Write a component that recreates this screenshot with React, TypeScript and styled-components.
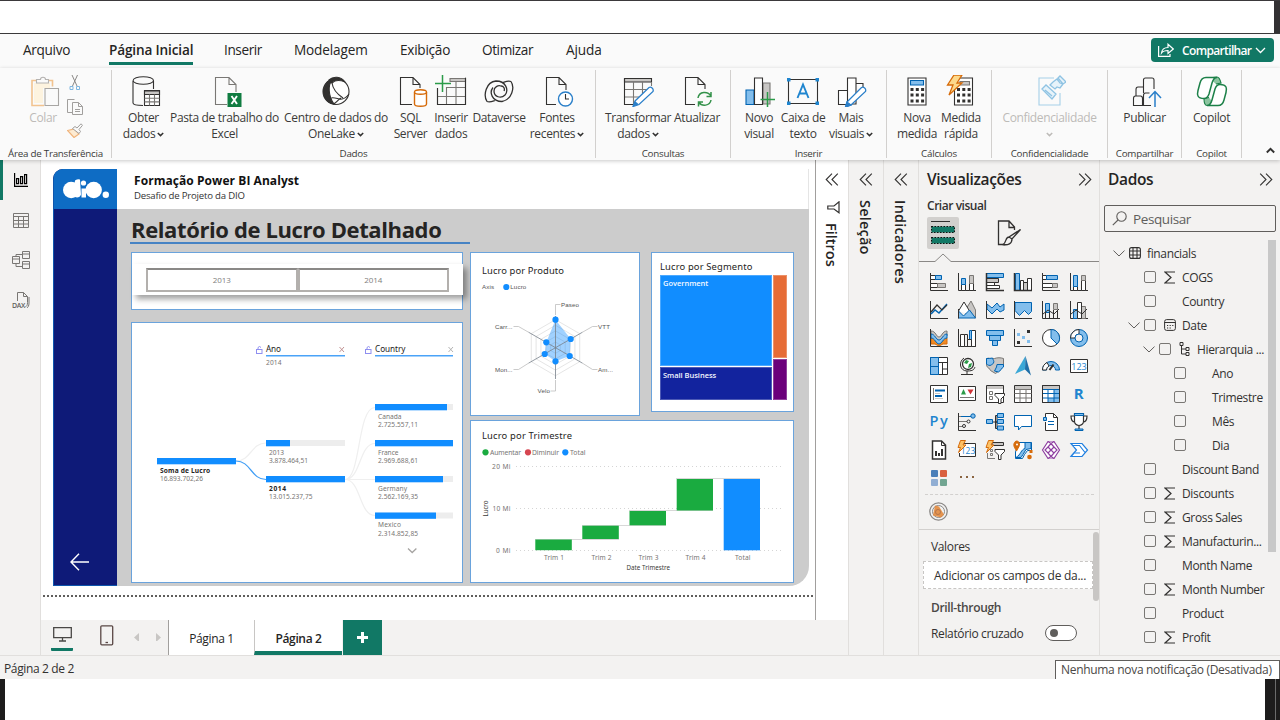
import React from "react";
import styled, { createGlobalStyle } from "styled-components";

const INK = "#323130";
const GREEN = "#117865";
const BLUE = "#0063b1";
const SKY = "#83beec";
const GREY = "#797774";
const SILVER = "#c8c6c4";
const ORANGE = "#d66b0a";
const UI = `"Open Sans", "Noto Sans", sans-serif`;

const Global = createGlobalStyle`
  * { box-sizing: border-box; }
  body { margin: 0; background: #fff; font-family: ${UI}; font-size: 12px; letter-spacing: -0.03em; color: ${INK}; overflow: hidden; }
  svg { display: block; flex: none; }
`;

/* ---------- frame ---------- */
const Screen = styled.div`
  width: 1280px; height: 720px; display: flex; flex-direction: column; background: #fff; overflow: hidden;
`;
const TopStrip = styled.div`
  height: 34px; display: flex; justify-content: flex-end; border-top: 1px solid #3b393b; border-bottom: 1px solid #3b393b; flex: none;
`;
const TopEdge = styled.div`width: 6px; background: #333133;`;
const BottomStrip = styled.div`flex: 1; display: flex; justify-content: space-between;`;
const BottomEdge = styled.div<{ $w: number }>`
  width: ${(p) => p.$w}px; background: #1d1c1c; display: flex; justify-content: flex-end; padding-right: ${(p) => (p.$w > 6 ? 4 : 0)}px;
`;
const EdgeLine = styled.div`width: 1px; background: #6b6b6b;`;

/* ---------- menu ---------- */
const MenuBar = styled.div`
  height: 34px; flex: none; background: #fafafa; display: flex; align-items: center; padding: 0 6px 0 23px;
`;
const MenuItem = styled.div<{ $w: number; $on?: boolean; $ls?: number }>`
  width: ${(p) => p.$w}px; font-size: 13.6px; letter-spacing: ${(p) => p.$ls ?? -0.4}px; font-weight: ${(p) => (p.$on ? 600 : 400)}; color: #252423; white-space: nowrap;
  & > span { display: inline-block; height: 28px; line-height: 26px; margin-top: -1px; border-bottom: 3px solid ${(p) => (p.$on ? GREEN : "transparent")}; }
`;
const ShareButton = styled.button`
  margin-left: auto; width: 123px; height: 24px; border: 0; border-radius: 4px; background: ${GREEN}; color: #fff; font: 600 12px ${UI};
  letter-spacing: -0.65px; display: flex; align-items: center; padding: 0 7px; gap: 8px; margin-top: -2px;
  & > svg:last-child { margin-left: -4px; }
`;

/* ---------- ribbon ---------- */
const Ribbon = styled.div`
  height: 92px; flex: none; background: #fafafa; display: flex; position: relative; z-index: 2; box-shadow: 0 1px 4px rgba(0,0,0,.22);
`;
const Group = styled.div<{ $w: number }>`
  width: ${(p) => p.$w}px; margin: 2px 0 2px; border-right: 1px solid #d2d0ce; display: flex; flex-direction: column; flex: none;
`;
const GroupBody = styled.div<{ $pad?: number }>`
  flex: 1; display: flex; padding-left: ${(p) => p.$pad ?? 0}px; justify-content: ${(p) => (p.$pad ? "flex-start" : "center")};
`;
const GroupName = styled.div`
  height: 12px; line-height: 12px; margin-bottom: -2px; font-size: 9.8px; letter-spacing: -0.25px; text-align: center; white-space: nowrap; color: #3b3a39;
`;
const RibbonBtn = styled.div<{ $w: number; $dim?: boolean }>`
  width: ${(p) => p.$w}px; display: flex; flex-direction: column; align-items: center; color: ${(p) => (p.$dim ? "#bdbbb8" : "#3b3a39")};
`;
const IconBox = styled.div<{ $shift: number }>`height: 40px; display: flex; align-items: center; justify-content: center; padding: 2px 0 0 ${(p) => p.$shift * 2}px;`;
const Line = styled.div`height: 16px; line-height: 16px; white-space: nowrap; display: flex; align-items: center; gap: 2px;`;
const ClipTools = styled.div`display: flex; flex-direction: column; align-items: center; gap: 8px; padding: 5px 0 0 3px;`;
const RibbonEnd = styled.div`flex: 1; display: flex; align-items: flex-end; justify-content: flex-end; padding: 0 5px 6px 0;`;

const Caret = ({ c = INK }: { c?: string }) => (
  <svg width="7" height="5" viewBox="0 0 7 5" fill="none" stroke={c} strokeWidth="1.5"><path d="M.8 1l2.7 2.6L6.2 1" /></svg>
);

const Pic = ({ w = 32, h = 32, children }: { w?: number; h?: number; children: React.ReactNode }) => (
  <svg width={w} height={h} viewBox={`0 0 ${w} ${h}`} fill="none" stroke={INK} strokeWidth="1.1">{children}</svg>
);

const icons = {
  paste: <Pic><path d="M8 5.500H3v25h12M18 5.500h5.500v6" stroke="#f2c38f" strokeWidth="1.6" /><path d="M5 8v20h9V13h7V8z" fill="#fdf3df" stroke="none" /><path d="M7.500 8V4.500h4c0-3 5-3 5 0h3V8z" stroke="#b5b3b1" fill="#fafafa" /><path d="M16 13.500h13.500v17H16z" fill="#fafafa" stroke="#a8a6a4" /></Pic>,
  database: <Pic><path d="M3 6v22c0 1.800 4 2.500 10 2.500M23.500 6v8" /><ellipse cx="13.300" cy="5.500" rx="10.200" ry="3.800" /><path d="M14.500 15.500h15v15h-15z" fill="#fff" /><path d="M14.500 16h15v3.500h-15z" fill={SILVER} /><path d="M14.500 23.200h15M14.500 26.900h15M19.500 19.500v11M24.500 19.500v11" stroke={GREY} /></Pic>,
  excel: <Pic><path d="M17 29.500H5.500v-27H19l7 7V17M19 2.500V9.500h7" stroke={GREY} /><path d="M17.500 18h14v14h-14z" fill="#107c41" stroke="none" /><path d="M21.500 21l5.500 8M27 21l-5.500 8" stroke="#fff" strokeWidth="1.900" /></Pic>,
  onelake: <Pic><circle cx="16" cy="16.500" r="13" fill="#fff" /><path d="M6.500 8C8 5 10 6 12 5c-4 5-4 16 2 24C5 28 0 17 6.500 8z" fill={INK} /><path d="M9 5C13 1 21 1 25 7c-5-2-10-2-13 1z" fill={INK} /><path d="M12 8c1 7 5 11 11 15M8 26c3-5 7-3 11-2 4 1 7-1 10-5M13 29c4-1 4-4 8-6" /></Pic>,
  sql: <Pic><path d="M16 29.500H4.500v-27H17l7 7V13M17 2.500V9.500h7" /><path d="M18.500 17v12c0 3 12 3 12 0V17" stroke={ORANGE} fill="#fff" strokeWidth="1.400" /><ellipse cx="24.500" cy="17" rx="6" ry="2.200" stroke={ORANGE} fill="#fff" strokeWidth="1.400" /></Pic>,
  insert: <Pic><path d="M15 3.500h15.500v3H15z" fill={SILVER} stroke={GREY} /><path d="M2.500 13v16.500h28V2.500M2.500 21.500h28M12 12.500h18.500M11.500 12v17.500M21 7v22.500" stroke={GREY} /><path d="M2.500 13v16.500h28V3" /><path d="M7.500 0v17M0 8.500h16" stroke="#2b9b48" strokeWidth="1.500" /></Pic>,
  dataverse: <Pic><path d="M4 26.500C0 20 3 7 13 6c10 0 13 9 9 14-4 4-11 2-11-4 0-4 4-6 7-5 3 0 4 3 3 5M28 6.500c4 6 1 18-9 20-10 0-13-9-9-14M4 26.500c3 1 5 0 8-1M28 6.500c-3-1-5 0-8 1" strokeWidth="1.300" /></Pic>,
  recent: <Pic><path d="M14 29.500H4.500v-27H17l7 7V15M17 2.500V9.500h7" /><circle cx="23.500" cy="24" r="7" stroke="#2a7fc9" fill="#fff" strokeWidth="1.400" /><path d="M23.500 19v5h3.500" /></Pic>,
  transform: <Pic><path d="M2.500 3.500h27v3.500h-27z" fill={SILVER} /><path d="M2.500 14.500h27M2.500 22h20M11.500 7v22.500M20.500 7v18M29.500 7v4" stroke={GREY} /><path d="M2.500 3.500v26h11" /><path d="M13 26L27 12.500c2-1 5 1 4 4L17 29.500l-6 2z" fill="#fff" stroke="#2a7fc9" strokeWidth="1.300" /><path d="M13 26l4 3.500-6 2z" fill="#2a7fc9" stroke="none" /></Pic>,
  refresh: <Pic><path d="M14 29.500H4.500v-27H17l7 7V14M17 2.500V9.500h7" /><path d="M17 23c1-7 10-7 13-2m0-4v4.500h-4.500M30 25c-1 6-9 7-12.500 2m0 4.500v-4.500H22" stroke="#33914a" strokeWidth="1.500" /></Pic>,
  newVisual: <Pic><path d="M3 15h8v14.500H3z" fill={SKY} stroke={BLUE} /><path d="M20 8h7v21h-7z" fill={SILVER} stroke={GREY} /><path d="M11.500 3h8v26.500h-8z" fill="#fff" /><path d="M24.500 17v15M17.500 24.500H32" stroke="#2b9b48" strokeWidth="1.500" /></Pic>,
  textBox: <Pic><path d="M1.500 4.500h29v24h-29z" /><path d="M0 3h3.500v3.500H0zM28.500 3H32v3.500h-3.500zM0 26.500h3.500V30H0zM28.500 26.500H32V30h-3.500z" fill="#1f85cf" stroke="none" /><path d="M10.500 23L16 9.500 21.500 23M12.500 18.500h7" stroke="#1f85cf" strokeWidth="1.900" /></Pic>,
  moreVisuals: <Pic><path d="M3.500 15.500h9v14h-9zM12.500 3h8.500v26h-8.500zM21 8.500h7v8" fill="#fff" /><path d="M12 27L26.500 12.500c2-1 5 1 4 4L16 30l-5.500 2z" fill="#fff" stroke="#2a7fc9" strokeWidth="1.300" /><path d="M12 27l4 3-5.500 2z" fill="#2a7fc9" stroke="#2a7fc9" /></Pic>,
  calc: <Pic><path d="M7 3h18v27H7z" fill="#fff" /><path d="M9.500 5.500h13V10h-13z" fill={SKY} stroke={BLUE} /><path d="M9.500 14.500h14M9.500 20h14M9.500 26h14" strokeWidth="3" strokeDasharray="3 2.300" /></Pic>,
  quick: <Pic><path d="M9.500 3h18v27h-18z" fill="#fff" /><path d="M15 6.500h9.500V10H15z" fill={SILVER} stroke={GREY} /><path d="M12 14.500h14M12 20h14M12 26h14" strokeWidth="3" strokeDasharray="3 2.300" /><path d="M9 0h8l-5 8h5L4 20l4-10H2.500z" fill="#fdd98b" stroke={ORANGE} strokeWidth="1.300" /></Pic>,
  sensitivity: <Pic><path d="M20 3H5v27h21V18" stroke="#a5cfe8" /><path d="M8 14l4-4 10 9-4 5zM11 15l7 6M19 7l4-3 3 4 3 1-3 4-3-1-2 2-5-4zM24 3l2-2 6 6-3 2z" stroke="#8fc3e3" fill="#e7f3fa" strokeWidth="1.300" /></Pic>,
  publish: <Pic><path d="M2.500 30.500v-7c0-2 1-2.500 2-2.500h5c1.500 0 2 1 2 2.500v7zM12.500 30.500v-10c0-2 1-2.500 2-2.500h4M20 30.500h-8M5 20.500v-6c0-2 1-2.500 2-2.500h5.500v6M12.500 12V5c0-1.500 1-2 2-2h6.500c1 0 2 .5 2 2v9" /><path d="M24 32V17M18 23l6-6.500 6 6.500" stroke="#2a7fc9" strokeWidth="1.500" /></Pic>,
  copilot: <Pic><path d="M13 3l8-1c2 0 3 2 4 6l-5 1M19 30l-8 .5c-2 0-3-3-3-7l5-1" fill="#8cc4a0" stroke="#1c8048" /><path d="M4 8c1-4 3-5.500 6-5.500h11c-3 0-4 2-5 5.500l-3 11c-1 3-2 4.500-5 4.500-7 0-7-4-6-8zM28 25c-1 4-3 5.500-6 5.500H11c3 0 4-2 5-5.500l3-11c1-3 2-4.500 5-4.500 7 0 7 4 6 8z" stroke="#1c8048" strokeWidth="1.500" fill="#fff" /></Pic>,
};
const iconShift: Partial<Record<keyof typeof icons, number>> = { paste: 2, database: 2, sql: 1, excel: 1, publish: 2, recent: 1, transform: 0, calc: -0, newVisual: 0 };

const Lines = ({ rows, caret, dim }: { rows: string[]; caret?: boolean; dim?: boolean }) => (
  <>
    {rows.map((r, i) => (
      <Line key={i}>{r}{caret && i === rows.length - 1 ? <Caret c={dim ? "#bdbbb8" : INK} /> : null}</Line>
    ))}
  </>
);
const Btn = ({ icon, rows, w, caret, dim }: { icon: keyof typeof icons; rows: string[]; w: number; caret?: boolean; dim?: boolean }) => (
  <RibbonBtn $w={w} $dim={dim}>
    <IconBox $shift={iconShift[icon] ?? 0}>{icons[icon]}</IconBox>
    <Lines rows={rows} caret={caret} dim={dim} />
  </RibbonBtn>
);

/* ---------- body columns ---------- */
const Body = styled.div`height: 495px; flex: none; display: flex; background: #f3f2f1;`;
const Rail = styled.div`width: 41px; border-right: 1px solid #e1dfdd; display: flex; flex-direction: column; flex: none;`;
const RailItem = styled.div<{ $on?: boolean }>`
  height: 40px; display: flex; align-items: center; justify-content: center; border-left: 3px solid ${(p) => (p.$on ? GREEN : "transparent")};
  padding-right: 2px;
`;
const Center = styled.div`width: 808px; display: flex; flex-direction: column; border-right: 1px solid #e1dfdd; flex: none;`;
const CenterTop = styled.div`height: 460px; display: flex; background: #fff;`;
const Canvas = styled.div`width: 775px; border-right: 1px solid #a19f9d; padding: 9px 0 0 12px; overflow: hidden;`;
const Dotted = styled.div`
  margin: 9px 1px 0 -10px; height: 2px; background: repeating-linear-gradient(90deg, #605e5c 0 2px, #fff 2px 4px);
`;
const SidePane = styled.div<{ $w: number; $bg?: string; $last?: boolean }>`
  width: ${(p) => p.$w}px; background: ${(p) => p.$bg ?? "#f3f2f1"}; border-right: ${(p) => (p.$last ? 0 : 1)}px solid #e1dfdd; flex: none;
  display: flex; flex-direction: column; align-items: center; padding-top: 13px;
`;
const FunnelBox = styled.div`padding: 15px 0 0 3px;`;
const Vertical = styled.div<{ $mt: number; $ls?: number }>`
  writing-mode: vertical-rl; font-size: 14.5px; font-weight: 600; line-height: 18px; letter-spacing: ${(p) => p.$ls ?? 0.2}px; margin-top: ${(p) => p.$mt}px; margin-right: 3px; color: #252423; white-space: nowrap;
`;

/* ---------- report ---------- */
const Report = styled.div`width: 756px; height: 417px; display: flex; border-radius: 10px 0 20px 0; overflow: hidden; background: #ccc;`;
const Brand = styled.div`width: 64px; background: #0e1a78; display: flex; flex-direction: column; justify-content: space-between; flex: none; border-left: 1px solid #0e56ad; border-bottom: 1px solid #0e56ad;`;
const Logo = styled.div`height: 40px; background: #0e6cc4; display: flex; align-items: center; padding-left: 8px;`;
const Back = styled.div`height: 44px; padding: 12px 0 0 16px;`;
const Sheet = styled.div`flex: 1; display: flex; flex-direction: column;`;
const SheetHead = styled.div`height: 40px; background: #fff; padding: 4px 0 0 17px; border-right: 1px solid #e5e5e5;`;
const HeadTitle = styled.div`font-size: 12px; font-weight: 700; line-height: 16px; letter-spacing: 0.06px; color: #111;`;
const HeadSub = styled.div`font-size: 9.6px; line-height: 14px; letter-spacing: -0.2px; color: #333;`;
const BigTitle = styled.div`
  width: 340px; height: 35px; margin-left: 13px; border-bottom: 2px solid #4683c4; font-size: 22px; font-weight: 700; letter-spacing: -0.38px; line-height: 40px; color: #252423;
  padding-left: 1px; white-space: nowrap;
`;
const Board = styled.div`display: flex; gap: 7px; padding: 8px 0 0 14px;`;
const Column = styled.div<{ $w: number }>`width: ${(p) => p.$w}px; display: flex; flex-direction: column;`;
const Pair = styled.div`display: flex; justify-content: space-between; align-items: flex-start; height: 168px;`;
const Card = styled.div<{ $w: number; $h: number; $mt?: number }>`
  width: ${(p) => p.$w}px; height: ${(p) => p.$h}px; margin-top: ${(p) => p.$mt ?? 0}px; background: #fff; border: 1px solid #6aa3dc; flex: none;
`;
const Slicer = styled.div`
  margin: 11px -1px 0 0; height: 31px; background: #fff; display: flex; padding: 4px 14px 4px 14px; box-shadow: 4px 4px 6px rgba(0,0,0,.38);
`;
const SlicerTile = styled.div`
  flex: 1; height: 24px; border: 2px solid #b3b0ad; border-top-color: #8a8886; line-height: 20px; text-align: center; font-size: 8px; letter-spacing: -0.1px; color: #807e7c;
`;
const ChartTitle = styled.div`font-size: 9.4px; line-height: 12px; letter-spacing: 0.15px; font-family: "Noto Sans", sans-serif; color: #252423; white-space: nowrap;`;
const MapBox = styled.div`padding: 8px 6px 0 8px;`;
const MapRow = styled.div`display: flex; gap: 1px; height: 125px; margin-top: 2px;`;
const MapCol = styled.div<{ $w: number }>`width: ${(p) => p.$w}px; display: flex; flex-direction: column; gap: 1px;`;
const MapTile = styled.div<{ $c: string; $h: number }>`
  background: ${(p) => p.$c}; height: ${(p) => p.$h}px; color: #f4f8ff; font-size: 7.500px; font-weight: 600; letter-spacing: -0.03px; line-height: 10px; padding: 2px 0 0 2px; border: 1px solid rgba(255,255,255,.25);
  white-space: nowrap;
`;

/* ---------- page tabs and status ---------- */
const TabBar = styled.div`height: 35px; display: flex; background: #f3f2f1;`;
const Views = styled.div`width: 127px; display: flex; padding: 4px 6px 0 10px;`;
const View = styled.div<{ $w: number; $on?: boolean; $ml?: number; $pb?: number }>`
  width: ${(p) => p.$w}px; height: 27px; margin-left: ${(p) => p.$ml ?? 0}px; border-bottom: 3px solid ${(p) => (p.$on ? GREEN : "transparent")}; border-radius: 1px;
  display: flex; justify-content: center; align-items: center; padding-bottom: ${(p) => p.$pb ?? 3}px;
`;
const PageTab = styled.div<{ $w: number; $on?: boolean }>`
  width: ${(p) => p.$w}px; background: #fff; border-left: 1px solid ${(p) => (p.$on ? "#c8c6c4" : "#a19f9d")}; text-align: center; line-height: 37px; font-size: 12px;
  font-weight: ${(p) => (p.$on ? 600 : 400)}; letter-spacing: ${(p) => (p.$on ? -0.35 : -0.35)}px; color: #252423; border-bottom: ${(p) => (p.$on ? 4 : 0)}px solid ${GREEN};
`;
const AddTab = styled.div`width: 39px; margin-left: 1px; background: ${GREEN}; display: flex; align-items: center; justify-content: center;`;
const Status = styled.div`
  height: 24px; flex: none; background: #f3f2f1; border-top: 1px solid #e1dfdd; padding-left: 4px; line-height: 26px; position: relative; font-size: 12px;
`;
const Notice = styled.div`
  position: absolute; right: 0; top: 4px; width: 225px; height: 19px; background: #fff; border: 1px solid #605e5c; border-bottom: 0; line-height: 18px; padding-left: 5px; color: #4a4846;
  letter-spacing: -0.31px; white-space: nowrap;
`;

/* ---------- visualizations ---------- */
const VisPane = styled.div`width: 181px; border-right: 1px solid #e1dfdd; display: flex; flex-direction: column; flex: none;`;
const PaneHead = styled.div`
  height: 38px; display: flex; align-items: center; justify-content: space-between; padding: 0 7px 0 8px; font-size: 15.5px; font-weight: 600; letter-spacing: -0.35px; color: #252423;
`;
const SubHead = styled.div`padding-left: 8px; height: 16px; line-height: 16px; font-weight: 600; letter-spacing: -0.46px;`;
const Modes = styled.div`height: 47px; display: flex; padding: 3px 0 0 8px; gap: 34px;`;
const Mode = styled.div<{ $on?: boolean }>`
  width: 32px; height: 32px; border-radius: 2px; background: ${(p) => (p.$on ? "#d2d0ce" : "transparent")}; display: flex; align-items: center; justify-content: center;
`;
const TabLine = styled.svg`margin-top: -8px;`;
const VisGrid = styled.div`
  display: grid; grid-template-columns: repeat(6, 28px); grid-auto-rows: 28px; padding-left: 6px; margin-top: 6px; justify-items: center; align-items: center; height: 224px;
`;
const Dashes = styled.div`margin: 2px 5px 0 6px; border-top: 1px dashed #d2d0ce;`;
const Custom = styled.div`height: 35px; padding: 7px 0 0 10px; border-bottom: 1px solid #d2d0ce;`;
const Fields = styled.div`flex: 1; display: flex; justify-content: space-between; padding-top: 2px;`;
const FieldCol = styled.div`width: 174px;`;
const FieldName = styled.div<{ $b?: boolean }>`
  padding-left: 12px; height: 30px; line-height: 30px; font-weight: ${(p) => (p.$b ? 600 : 400)}; color: ${(p) => (p.$b ? "#4a4846" : INK)};
`;
const Well = styled.div`
  margin: -1px 0 4px 4px; height: 28px; background: #fff; border: 1px dashed #c8c6c4; line-height: 27px; padding-left: 10px; white-space: nowrap; letter-spacing: -0.27px;
`;
const CrossRow = styled.div`padding: 0 16px 0 12px; height: 20px; display: flex; align-items: center; justify-content: space-between;`;
const Toggle = styled.div`width: 32px; height: 16px; border-radius: 8px; border: 1px solid #605e5c; background: #fff; padding: 3px 4px;`;
const Knob = styled.div`width: 8px; height: 8px; border-radius: 50%; background: #605e5c;`;
const ThumbA = styled.div`width: 6px; height: 69px; border-radius: 3px; background: #c8c6c4;`;

/* ---------- data ---------- */
const DataPane = styled.div`width: 180px; display: flex; flex-direction: column; flex: none;`;
const Search = styled.div`
  margin: 7px 4px 9px; height: 27px; border: 1px solid #605e5c; border-radius: 2px; display: flex; align-items: center; gap: 6px; padding-left: 7px; font-size: 13.500px; letter-spacing: -0.4px; color: #605e5c;
`;
const Tree = styled.div`display: flex; justify-content: space-between; flex: 1; padding-right: 4px;`;
const TreeRows = styled.div`width: 168px; overflow: visible;`;
const TreeRow = styled.div<{ $in: number }>`height: 24px; display: flex; align-items: center; padding-left: ${(p) => p.$in}px; white-space: nowrap;`;
const Slot = styled.div<{ $w: number }>`width: ${(p) => p.$w}px; flex: none; display: flex; align-items: center;`;
const Check = styled.div`width: 12px; height: 12px; border: 1px solid #797774; border-radius: 2px; margin-top: -1px;`;
const ThumbB = styled.div`width: 8px; height: 312px; margin-top: -1px; background: #c8c8c8;`;

const DoubleChevron = ({ left }: { left?: boolean }) => (
  <svg width="14" height="13" viewBox="0 0 14 13" fill="none" stroke={INK} strokeWidth="1.1">
    <path d={left ? "M7 .7L1.200 6.500 7 12.300M12.800 .7L7 6.500l5.800 5.800" : "M1.200 .7L7 6.500 1.200 12.300M7 .7l5.800 5.800L7 12.300"} />
  </svg>
);
const Chevron = () => <svg width="12" height="7" viewBox="0 0 12 7" fill="none" stroke="#605e5c"><path d="M.5 .6L6 6 11.500 .6" /></svg>;
const Sigma = () => <svg width="12" height="13" viewBox="0 0 12 13" fill="none" stroke={INK} strokeWidth="1.2"><path d="M11 1H1l6 5.500L1 12h10" /></svg>;
const Cal = () => (
  <svg width="12" height="12" viewBox="0 0 12 12" fill="none" stroke={INK}><rect x=".6" y=".6" width="10.800" height="10.800" rx="2" /><path d="M.6 3.500h10.800" /><path d="M3 6.500h7M3 9h5" strokeDasharray="1.200 1.400" /></svg>
);
const Hier = () => (
  <svg width="12" height="14" viewBox="0 0 12 14" fill="none" stroke={INK}><path d="M1 .5h3v3H1zM7 5.500h3v3H7zM7 10.500h3v3H7zM2.500 3.500V12H7M2.500 7H7" /></svg>
);
const TableIcon = () => (
  <svg width="12" height="12" viewBox="0 0 12 12" fill="none" stroke={INK} strokeWidth="1.100"><rect x=".6" y=".6" width="10.800" height="10.800" rx="2" /><path d="M.6 4h10.800M.6 8h10.800M4 .6v10.800M8 .6v10.800" /></svg>
);

const V = ({ children }: { children: React.ReactNode }) => (
  <svg width="18" height="18" viewBox="0 0 18 18" fill="none" stroke={INK} overflow="visible">{children}</svg>
);
const axis = <path d="M.5 0v17.500H18" />;
const table = <><path d="M.5.500h17v17H.500z" fill="#fff" /><path d="M1 1h16v3H1z" fill={SILVER} stroke="none" /></>;
const bolt = <path d="M2.500-.500h5L5 4h3L.500 11.500 2.500 6.500H0z" fill="#fdc266" stroke={ORANGE} />;

const visuals: React.ReactNode[] = [
  <V>{axis}<path d="M.5 2.500h5v4h-5zM.5 10.500h7v4h-7z" fill="#fff" /><path d="M5.500 2.500h6v4h-6z" fill={SKY} stroke={BLUE} /><path d="M7.500 10.500h8v4h-8z" fill={SILVER} stroke={GREY} /></V>,
  <V>{axis}<path d="M3.500 11.500h4v6h-4zM11.500 10.500h4v7h-4z" fill="#fff" /><path d="M3.500 5.500h4v6h-4z" fill={SKY} stroke={BLUE} /><path d="M11.500 2.500h4v8h-4z" fill={SILVER} stroke={GREY} /></V>,
  <V><path d="M.5 5.500h12v4H.500z" fill={SILVER} /><path d="M.5 9.500h8v3h-8zM.5 12.500h13v3H.500z" fill="#fff" /><path d="M.5.500h17v4H.500z" fill={SKY} stroke={BLUE} /><path d="M.5 0v17.500H18" strokeWidth="1.500" /></V>,
  <V><path d="M6.500 7.500h3v10h-3zM13.500 5.500h4v12h-4z" fill="#fff" /><path d="M9.500 9.500h4v8h-4z" fill={SILVER} /><path d="M1.500.500h4v17h-4z" fill={SKY} stroke={BLUE} /><path d="M.5 0v17.500H18" strokeWidth="1.500" /></V>,
  <V>{axis}<path d="M.5 2.500h4v4h-4zM.5 10.500h10v4H.500z" fill="#fff" /><path d="M4.500 2.500h11v4h-11z" fill={SKY} stroke={BLUE} /><path d="M10.500 10.500h5v4h-5z" fill={SILVER} stroke={GREY} /></V>,
  <V>{axis}<path d="M3.500 13.500h4v4h-4zM11.500 7.500h4v10h-4z" fill="#fff" /><path d="M3.500 2.500h4v11h-4z" fill={SKY} stroke={BLUE} /><path d="M11.500 2.500h4v5h-4z" fill={SILVER} stroke={GREY} /></V>,
  <V>{axis}<path d="M1 13l4-4 4 3 8-9" stroke={BLUE} strokeWidth="1.500" /><path d="M1 11l6-7 5 5 5-5" strokeWidth="1.200" /></V>,
  <V><path d="M8 8l5-8 4.500 9v8L8 14z" fill={SILVER} stroke={GREY} /><path d="M.500 10L6 1l8 13" fill="#fff" /><path d="M.5 10l5 5 6-6 6 8H.500z" fill={SKY} stroke={BLUE} /><path d="M.500 8v9.500" /></V>,
  <V><path d="M1 3l5 4 5-5 3 4 4-3v6l-4 2-3-3-5 5-5-5z" fill={SKY} stroke={BLUE} />{axis}</V>,
  <V><path d="M1 1.500h16.500v9l-3 3-4-4-5 5-4.500-5z" fill={SKY} stroke={BLUE} />{axis}</V>,
  <V>{axis}<path d="M3.500 2.500h4v9h-4z" fill={SKY} stroke={BLUE} /><path d="M11.500 2.500h4v6h-4z" fill={SILVER} stroke={GREY} /><path d="M3.500 11v6.500M7.500 11v6.500M11.500 9v8.500M15.500 9v8.500M1 13l5-4 6 4 5-5" /></V>,
  <V>{axis}<path d="M3.500 8.500h4v9h-4z" fill={SKY} stroke={BLUE} /><path d="M11.500 5.500h4v12h-4z" fill={SILVER} stroke={GREY} /><path d="M7.500 1.500h4v16h-4z" fill="#fff" /><path d="M1 13l5-4 6 4 5-5" /></V>,
  <V><path d="M1 9h4l2 3h4l2-3h4v6h-4l-4 2-4-2H1z" fill="#f08a24" stroke={ORANGE} /><path d="M1 2c5 0 5 6 8 6s3-6 8-6v5c-4 0-4 6-8 6S5 7 1 7z" fill={SILVER} stroke={GREY} /><path d="M1 5c4 0 5 6 8 6s4-6 8-6v4c-4 0-5 6-8 6s-4-6-8-6z" fill={SKY} stroke={BLUE} />{axis}</V>,
  <V>{axis}<path d="M2.500 5.500h4v12h-4zM9.500 10.500v7M13.500 1.500h4v16h-4z" fill="#fff" /><path d="M11.500 1.500h2v9h-2z" fill={SKY} stroke={BLUE} /><path d="M6.500 5.500h3v5h4" /></V>,
  <V><g fill={SKY} stroke={BLUE}><path d="M.5 1.500h17v5H.500zM3.500 6.500h11v5h-11zM6.500 11.500h5v5h-5z" /></g></V>,
  <V>{axis}<g stroke="none"><path d="M13 1h3v3h-3zM3 12h3v3H3z" fill={INK} /><path d="M3 4h3v3H3zM8 7h3v3H8zM13 11h3v3h-3z" fill={SKY} /></g></V>,
  <V><circle cx="9" cy="9" r="8.500" fill="#fff" /><path d="M9 .500a8.500 8.500 0 0 1 6 14.500L9 9z" fill={SKY} stroke={BLUE} /></V>,
  <V><circle cx="9" cy="9" r="8.500" fill={SKY} stroke={BLUE} /><path d="M.500 9A8.500 8.500 0 0 1 9 .500V5A4 4 0 0 0 5 9z" fill="#fff" /><circle cx="9" cy="9" r="4" fill="#f3f2f1" stroke={BLUE} /></V>,
  <V><path d="M.500.500h17v17H.500z" fill="#fff" /><path d="M.500.500h8v17h-8z" fill={SKY} stroke={BLUE} /><path d="M.500 9.500h8" stroke={BLUE} /><path d="M8.500 5.500h9M12.500 5.500v12M12.500 12h5" /></V>,
  <V><circle cx="10" cy="7" r="5.500" fill="#fff" strokeWidth="1.300" /><path d="M8 3l3 1-2 3-3-1zM11 7l3-1-1 4-3 1z" fill="#2b9b48" stroke="none" /><path d="M6 1C0 5 2 14 9 14s7-2 8-4M9 14v3M3 17.500h12" /></V>,
  <V><path d="M.5 1.500c3-1 5 1 8 0s6-1 9 0v8c-2 1-2 3-4 4l-4 3-5-3c0-2-3-2-4-5z" fill={SILVER} stroke={GREY} /><path d="M.5 1.500c2 0 4 0 6-.5.5 2 2 3 1 5l-2 2c-2 1-4 0-5-1zM11 7.500h6.500V10c-2 1-3 4-5 5l-4-1 2-4z" fill={SKY} stroke={BLUE} /></V>,
  <V><path d="M11.500-1L1 17l10-4.500z" fill="#3aa7d6" stroke="none" /><path d="M11.500-1L17 18.500l-6-6z" fill="#1f6fa8" stroke="none" /></V>,
  <V><path d="M.5 13A8.500 8.500 0 0 1 17.500 13h-4a4.500 4.500 0 0 0-9 0z" fill={SKY} stroke={BLUE} /><path d="M.5 13a8.500 8.500 0 0 1 4.500-7.500l2 3.500c-1.500 1-2.500 2-2.500 4z" fill="#fff" /><path d="M7.500 13l4-5.500" strokeWidth="2" /></V>,
  <V><path d="M.500 2.500h17v13H.500z" fill="#fff" /><text x="9" y="12.500" fontSize="9" textAnchor="middle" letterSpacing="0" fill="#1f85cf" stroke="none">123</text></V>,
  <V><path d="M.500.500h17v17H.500z" fill="#fff" /><path d="M3.500 3v12" stroke={GREY} /><path d="M5 5.500h10M5 11h7" stroke={BLUE} strokeWidth="2" /><path d="M5 8.500h5M5 13.500h8" stroke={SILVER} /></V>,
  <V><path d="M.500 1.500h17v14H.500z" fill="#fff" /><path d="M3 9.500L5.500 4 8 9.500z" fill="#2b9b48" stroke="none" /><path d="M9.500 4.500h6l-3 5z" fill="#d13438" stroke="none" /><path d="M2 12.500h14" stroke={GREY} /></V>,
  <V>{table}<path d="M3.500 6.500h3v3h-3zM3.500 11.500h3v3h-3z" stroke={GREY} /><path d="M9 8.500h9.500v2L15 14v4.500h-2.500V14L9 10.500z" fill="#fff" /></V>,
  <V>{table}<path d="M.500 4.500h17M.500 8.500h17M.500 13h17M6 4.500v13M12 4.500v13" stroke={GREY} /></V>,
  <V>{table}<path d="M12 4.500h5.500v13H6V13h6z" fill={SKY} stroke="none" /><path d="M.500 4.500h17M.500 8.500h17M.500 13h17M6 4.500v13M12 4.500v13" stroke={BLUE} /><path d="M.500.500h17v17H.500z" /></V>,
  <V><text x="8.500" y="14" fontSize="15" fontWeight="700" textAnchor="middle" fill="#1f85cf" stroke="none">R</text></V>,
  <V><text x="-.5" y="13" fontSize="14.500" fontWeight="600" textLength="18" fill="#1f85cf" stroke="none">Py</text></V>,
  <V>{axis}<path d="M1 3.500h13M1 8.500h9M1 13.500h5" stroke={GREY} /><path d="M3 3.500h10" stroke={BLUE} /><circle cx="15" cy="3" r="2.200" fill={SKY} stroke={BLUE} /><circle cx="10.500" cy="8.500" r="1.500" fill="#fff" /><circle cx="6" cy="13" r="1.500" fill="#fff" /></V>,
  <V><path d="M6 9h5M11 9V3M11 9v6M9.500 2.500H12M9.500 9H12M9.500 15.500H12M9.500 2.500v13" /><path d="M.500 6.500h6v4h-6zM11.500.500h6v4h-6zM11.500 6.500h6v4h-6zM11.500 13h6v4h-6z" fill={SKY} stroke={BLUE} /></V>,
  <V><path d="M.500 2.500h17v11H7.500l-3 3.500v-3.500h-4z" fill="#fff" stroke={BLUE} /></V>,
  <V><path d="M3.500 4V.500h8l4 4v13h-12V9" fill="#fff" /><path d="M11.500.500v4h4" /><path d="M1.500 4.500h3v3h-3z" fill={SKY} stroke={BLUE} /><path d="M6 8.500h6M6 11.500h6" stroke={BLUE} /></V>,
  <V><path d="M4.500.500h9v8c0 2-2 4-4.500 4s-4.500-2-4.500-4zM4.500 3H1c0 5 2 6 4 6M13.500 3H17c0 5-2 6-4 6M9 12.500V16" fill="#fff" strokeWidth="1.200" /><path d="M4.500.500h9v2h-9zM5 16h8v1.500H5z" fill={SKY} stroke={BLUE} /></V>,
  <V><path d="M2.500 0h9l4 4v14h-13z" fill="#fff" strokeWidth="1.500" /><path d="M11.500 0v4.500h4" /><path d="M5 10h2v5H5zM8 12h2v3H8zM11 8h2v7h-2z" fill={INK} stroke="none" /></V>,
  <V><path d="M5 2.500h12.500v13H1.500V12" fill="#fff" /><text x="10" y="12.800" fontSize="8.500" textAnchor="middle" letterSpacing="0" fill="#1f85cf" stroke="none">123</text>{bolt}</V>,
  <V><path d="M6 1.500h11.500v3H6z" fill={SILVER} /><path d="M1.500 12v5.500H9M4.500 8.500h2v2h-2zM4.500 12.500h2v2h-2z" stroke={GREY} /><path d="M9 8.500h9.500v2L15 14v4.500h-2.500V14L9 10.500z" fill="#fff" />{bolt}</V>,
  <V><path d="M5 1.500h12.500v8l-4 0-3 4-2 4h-7V11z" fill="#fff" stroke={BLUE} /><path d="M11 1.500h6v6l-5 1-3 5-2 3H2c5-3 5-8 9-9z" fill={SKY} stroke={BLUE} /><path d="M2.500 10C0 6-1 4 .500 1.500S5 0 5.500 2.500 4 7 2.500 10z" fill={ORANGE} stroke={ORANGE} /><circle cx="3" cy="3.500" r="1" fill="#fff" stroke="none" /><path d="M15.500 9h3v3h-3z" fill={ORANGE} stroke="none" /><circle cx="15.500" cy="16" r="2.300" fill={ORANGE} stroke="none" /></V>,
  <V><g stroke="#8e3fa0" strokeWidth="1.200"><path d="M6 .500h6L17.500 9 12 17.500H6L.500 9z" fill="#fff" /><path d="M9 2.500L12 6 9 9 6 6zM9 9l3 3-3 3.500L6 12zM12 6l3 3-3 3-3-3zM6 6L3 9l3 3 3-3zM6 .5l3 2 3-2M6 17.500l3-2 3 2" fill="#fff" /></g></V>,
  <V><g stroke="#1f7fe0" strokeWidth="1.200" fill="#fff"><path d="M1 2.500h11l5.500 6.500-5.500 6.500H1L6.500 9z" /><path d="M2.500 4.500h7L15 11.500M1 15.500L4 12h6" /></g></V>,
  <V><g stroke="none"><rect x="1" y="1" width="7" height="7" rx="1" fill="#4b7fb8" /><rect x="10" y="1" width="7" height="7" rx="1" fill="#d9613f" /><rect x="1" y="10" width="7" height="7" rx="1" fill="#91aed3" /><rect x="10" y="10" width="7" height="7" rx="1" fill="#72a591" /></g></V>,
  <V><path d="M2 7h2v2H2zM8 7h2v2H8zM14 7h2v2h-2z" fill="#8a6440" stroke="none" /></V>,
];

type Node = { name: string; indent: number; open?: boolean; box?: boolean; icon?: React.ReactNode };
const nodes: Node[] = [
  { name: "financials", indent: 13, open: true, icon: <TableIcon /> },
  { name: "COGS", indent: 28, box: true, icon: <Sigma /> },
  { name: "Country", indent: 28, box: true },
  { name: "Date", indent: 28, open: true, box: true, icon: <Cal /> },
  { name: "Hierarquia ...", indent: 43, open: true, box: true, icon: <Hier /> },
  { name: "Ano", indent: 58, box: true },
  { name: "Trimestre", indent: 58, box: true },
  { name: "Mês", indent: 58, box: true },
  { name: "Dia", indent: 58, box: true },
  { name: "Discount Band", indent: 28, box: true },
  { name: "Discounts", indent: 28, box: true, icon: <Sigma /> },
  { name: "Gross Sales", indent: 28, box: true, icon: <Sigma /> },
  { name: "Manufacturin...", indent: 28, box: true, icon: <Sigma /> },
  { name: "Month Name", indent: 28, box: true },
  { name: "Month Number", indent: 28, box: true, icon: <Sigma /> },
  { name: "Product", indent: 28, box: true },
  { name: "Profit", indent: 28, box: true, icon: <Sigma /> },
];

/* ---------- charts ---------- */
const ChartText = styled.text<{ $s?: number; $c?: string; $b?: number }>`
  font-family: "Noto Sans", sans-serif; font-size: ${(p) => p.$s ?? 6.6}px; fill: ${(p) => p.$c ?? "#777573"}; font-weight: ${(p) => p.$b ?? 400}; letter-spacing: 0;
`;
const ArialText = styled(ChartText)`font-family: "Liberation Sans", sans-serif;`;

type Branch = { x: number; y: number; name: string; value: string; vw: number; fill: number; nw: number; bold?: boolean };
const branches: Branch[] = [
  { x: 157, y: 458, name: "Soma de Lucro", nw: 50, value: "16.893.702,26", vw: 43, fill: 79, bold: true },
  { x: 266, y: 440, name: "2013", nw: 15, value: "3.878.464,51", vw: 39, fill: 24 },
  { x: 266, y: 476, name: "2014", nw: 17, value: "13.015.237,75", vw: 43.500, fill: 79, bold: true },
  { x: 375, y: 404, name: "Canada", nw: 23.500, value: "2.725.557,11", vw: 40, fill: 72 },
  { x: 375, y: 440, name: "France", nw: 20.500, value: "2.969.688,61", vw: 40, fill: 78 },
  { x: 375, y: 476, name: "Germany", nw: 29, value: "2.562.169,35", vw: 40, fill: 68 },
  { x: 375, y: 512.500, name: "Mexico", nw: 23, value: "2.314.852,85", vw: 40, fill: 61 },
];

const Decomposition = () => (
  <svg width="330" height="259" viewBox="132 323 330 259" fill="none">
    <g stroke="#efefef" strokeWidth="1.200">
      <path d="M236 461c15 0 15-18 30-18M345 479.500c16 0 12-72 30-72M345 479.500c16 0 14-36 30-36M345 479.500h30M345 479.500c16 0 14 36 30 36" />
    </g>
    <path d="M236 461c15 0 15 18.500 30 18.500" stroke="#3f9df5" strokeWidth="1.200" />
    {branches.map((b) => (
      <g key={b.name + b.value}>
        <rect x={b.x} y={b.y} width={b.x === 375 ? 78 : 79} height="6" fill="#ededed" />
        <rect x={b.x} y={b.y} width={b.fill} height="6.300" fill="#118dff" />
        <ChartText x={b.x + 3} y={b.y + 14.900} textLength={b.nw} $b={b.bold ? 700 : 400} $c={b.bold ? "#252423" : undefined}>{b.name}</ChartText>
        <ChartText x={b.x + 3} y={b.y + 23} textLength={b.vw}>{b.value}</ChartText>
      </g>
    ))}
    {[266, 375].map((x, i) => (
      <g key={x}>
        <rect x={x - 9.500} y="349.500" width="5.500" height="4" stroke="#8f8ff0" />
        <path d={`M${x - 8} 349.500v-2q1.500-2 3 0`} stroke="#8f8ff0" />
        <ChartText x={x} y="352.200" $s={8.200} textLength={i ? 30.500 : 15} $c="#252423">{i ? "Country" : "Ano"}</ChartText>
        <path d={`M${x} 355.700h${i ? 78 : 79}`} stroke="#4aa3f8" strokeWidth="1.600" />
        <path d={`M${x + 73.500} 347l4.500 5m0-5l-4.500 5`} stroke={i ? "#aaa" : "#b88"} strokeWidth=".9" />
      </g>
    ))}
    <ChartText x="266" y="365" textLength="15.500">2014</ChartText>
    <path d="M408 548.500l4.200 4 4.200-4" stroke="#a6a4a2" strokeWidth="1.300" />
  </svg>
);

const hex = (r: number) =>
  [0, 1, 2, 3, 4, 5].map((i) => `${555.500 + r * Math.sin((i * Math.PI) / 3)},${347.700 - r * Math.cos((i * Math.PI) / 3)}`).join(" ");

const Radar = () => (
  <svg width="168" height="162" viewBox="471 253 168 162" fill="none">
    <ChartText x="482" y="273.700" $s={9.400} textLength="82" $c="#252423">Lucro por Produto</ChartText>
    <ArialText x="482" y="289.300" $s={6.200} textLength="12" $c="#555">Axis</ArialText>
    <circle cx="506.300" cy="287" r="3.100" fill="#118dff" />
    <ArialText x="510.300" y="289.300" $s={6.200} textLength="16" $c="#555">Lucro</ArialText>
    {[5.600, 11.200, 16.800, 22.400, 28].map((r) => <polygon key={r} points={hex(r)} stroke="#dedede" strokeWidth=".8" />)}
    <polygon points="555.500,319.700 570.700,339 569.700,356 555.500,361.300 544.700,354 546.300,342.300" fill="#118dff" fillOpacity=".4" />
    <path d="M555.500 316v63M528.500 332.200l54 31M582.500 332.200l-54 31" stroke="#77808a" strokeWidth=".8" />
    <path d="M555.500 315v-10.500h5M582.500 332.200l10-5.700h5M582.500 363.200l10 6.300h5M555.500 380v11h-5M528.500 363.200l-10 6.300h-5M528.500 332.200l-10-5.700h-5" stroke="#b5b5b5" strokeWidth=".7" />
    {[[555.500, 319.700], [570.700, 339], [569.700, 356], [555.500, 361.300], [544.700, 354], [546.300, 342.300]].map(([x, y]) => (
      <circle key={x + "-" + y} cx={x} cy={y} r="3.100" fill="#118dff" />
    ))}
    <ArialText x="561" y="307" $s={6.200} textLength="18" $c="#555">Paseo</ArialText>
    <ArialText x="598" y="328.800" $s={6.200} textLength="12" $c="#555">VTT</ArialText>
    <ArialText x="598" y="372" $s={6.200} textLength="15" $c="#555">Am...</ArialText>
    <ArialText x="537.500" y="393.200" $s={6.200} textLength="12.500" $c="#555">Velo</ArialText>
    <ArialText x="495" y="372" $s={6.200} textLength="17.500" $c="#555">Mon...</ArialText>
    <ArialText x="495" y="328.800" $s={6.200} textLength="17.500" $c="#555">Carr...</ArialText>
  </svg>
);

const Waterfall = () => (
  <svg width="322" height="161" viewBox="471 421 322 161" fill="none">
    <ChartText x="482" y="439" $s={9.400} textLength="90" $c="#252423">Lucro por Trimestre</ChartText>
    {([[485.500, "#1aab40", "Aumentar", 490, 31], [528, "#d64550", "Diminuir", 532, 27], [565.300, "#118dff", "Total", 570, 15.500]] as const).map(([cx, c, t, x, w]) => (
      <g key={t}><circle cx={cx} cy="452.300" r="3.100" fill={c} /><ChartText x={x} y="454.800" $s={6.800} textLength={w}>{t}</ChartText></g>
    ))}
    {([[466.500, "20 Mi", 492, 18.500], [508.500, "10 Mi", 492.500, 18], [550.500, "0 Mi", 496, 14.500]] as const).map(([y, t, x, w]) => (
      <g key={t}><path d={`M516 ${y}h265`} stroke="#d5d5d5" strokeDasharray="1 3" /><ChartText x={x} y={y + 2.400} textLength={w}>{t}</ChartText></g>
    ))}
    <path d="M535 539.500h84M582 525.500h84M629 510.500h84M676 478.500h84" stroke="#d8d8d8" strokeWidth="1.200" />
    <g fill="#1aab40">
      <rect x="535.300" y="539.500" width="36.500" height="10.700" /><rect x="582.300" y="525.700" width="36.500" height="13.300" />
      <rect x="629.500" y="511" width="36.500" height="14.300" /><rect x="676.700" y="479" width="36.300" height="31.500" />
    </g>
    <rect x="723.700" y="479" width="36.300" height="71.300" fill="#118dff" />
    {([["Trim 1", 544, 20], ["Trim 2", 591.500, 20], ["Trim 3", 638.500, 20], ["Trim 4", 685.500, 20], ["Total", 735, 15.500]] as const).map(([t, x, w]) => (
      <ChartText key={t} x={x} y="560" textLength={w}>{t}</ChartText>
    ))}
    <ChartText x="626.500" y="570.300" $s={6.200} textLength="43.500" $c="#3b3a39">Date Trimestre</ChartText>
    <ChartText transform="translate(487.500 516.500) rotate(-90)" $s={6.200} textLength="16" $c="#3b3a39">Lucro</ChartText>
  </svg>
);

export default function App() {
  return (
    <Screen>
      <Global />
      <TopStrip><TopEdge /></TopStrip>
      <MenuBar>
        <MenuItem $w={86} $ls={-0.3}><span>Arquivo</span></MenuItem>
        <MenuItem $w={115} $on $ls={-0.15}><span>Página Inicial</span></MenuItem>
        <MenuItem $w={70}><span>Inserir</span></MenuItem>
        <MenuItem $w={106} $ls={-0.15}><span>Modelagem</span></MenuItem>
        <MenuItem $w={82} $ls={-0.25}><span>Exibição</span></MenuItem>
        <MenuItem $w={84}><span>Otimizar</span></MenuItem>
        <MenuItem $w={60} $ls={-0.1}><span>Ajuda</span></MenuItem>
        <ShareButton>
          <svg width="16" height="14" viewBox="0 0 16 14" fill="none" stroke="#fff" strokeWidth="1.200"><path d="M.6 3v10.400H12V11M3.500 10C4 6 6.500 4.500 10 4.500V1.200L15.300 6 10 10.500V7.500C7 7.500 5 8 3.500 10z" /></svg>
          Compartilhar
          <svg width="11" height="7" viewBox="0 0 11 7" fill="none" stroke="#fff" strokeWidth="1.300"><path d="M1 1l4.500 4.500L10 1" /></svg>
        </ShareButton>
      </MenuBar>

      <Ribbon>
        <Group $w={112}>
          <GroupBody $pad={22}>
            <Btn icon="paste" rows={["Colar"]} w={42} dim />
            <ClipTools>
              <svg width="12" height="16" viewBox="0 0 12 16" fill="none" stroke="#8a8886"><path d="M3 0l5 11M8.500 0l-5 11" /><path d="M1 11.500h3v3H1zM7.500 11.500h3v3h-3z" stroke="#7fb6e0" /></svg>
              <svg width="16" height="16" viewBox="0 0 16 16" fill="none" stroke="#a19f9d"><path d="M5.500 13.500H.500v-13h7M5.500 3.500h6l4 4v8h-10zM11.500 3.500v4h4M8 10.500h5M8 12.500h5" /></svg>
              <svg width="16" height="15" viewBox="0 0 16 15" fill="none" stroke="#a19f9d"><path d="M.5 7.500l7-1.500 4.500 5-5 3.500z" fill="#fdebd2" stroke="#f0b37a" strokeWidth="1.200" /><path d="M5.500 5.500l2.500-2 2 1.500L14 .8l1.500 1.500L12 6.500l1.500 2-1.500 2z" fill="#fafafa" /></svg>
            </ClipTools>
          </GroupBody>
          <GroupName>Área de Transferência</GroupName>
        </Group>
        <Group $w={484}>
          <GroupBody $pad={6}>
            <Btn icon="database" rows={["Obter", "dados"]} w={51} caret />
            <Btn icon="excel" rows={["Pasta de trabalho do", "Excel"]} w={111} />
            <Btn icon="onelake" rows={["Centro de dados do", "OneLake"]} w={112} caret />
            <Btn icon="sql" rows={["SQL", "Server"]} w={37} />
            <Btn icon="insert" rows={["Inserir", "dados"]} w={44} />
            <Btn icon="dataverse" rows={["Dataverse"]} w={52} />
            <Btn icon="recent" rows={["Fontes", "recentes"]} w={64} caret />
          </GroupBody>
          <GroupName>Dados</GroupName>
        </Group>
        <Group $w={135}>
          <GroupBody $pad={6}>
            <Btn icon="transform" rows={["Transformar", "dados"]} w={72} caret />
            <Btn icon="refresh" rows={["Atualizar"]} w={46} />
          </GroupBody>
          <GroupName>Consultas</GroupName>
        </Group>
        <Group $w={156}>
          <GroupBody $pad={6}>
            <Btn icon="newVisual" rows={["Novo", "visual"]} w={44} />
            <Btn icon="textBox" rows={["Caixa de", "texto"]} w={44} />
            <Btn icon="moreVisuals" rows={["Mais", "visuais"]} w={52} caret />
          </GroupBody>
          <GroupName>Inserir</GroupName>
        </Group>
        <Group $w={105}>
          <GroupBody $pad={8}>
            <Btn icon="calc" rows={["Nova", "medida"]} w={44} />
            <Btn icon="quick" rows={["Medida", "rápida"]} w={44} />
          </GroupBody>
          <GroupName>Cálculos</GroupName>
        </Group>
        <Group $w={116}>
          <GroupBody><Btn icon="sensitivity" rows={["Confidencialidade", ""]} w={100} caret dim /></GroupBody>
          <GroupName>Confidencialidade</GroupName>
        </Group>
        <Group $w={74}>
          <GroupBody><Btn icon="publish" rows={["Publicar"]} w={60} /></GroupBody>
          <GroupName>Compartilhar</GroupName>
        </Group>
        <Group $w={60}>
          <GroupBody><Btn icon="copilot" rows={["Copilot"]} w={50} /></GroupBody>
          <GroupName>Copilot</GroupName>
        </Group>
        <RibbonEnd>
          <svg width="9" height="7" viewBox="0 0 9 7" fill="none" stroke={INK} strokeWidth="1.900"><path d="M.8 5.500l3.700-3.700 3.700 3.700" /></svg>
        </RibbonEnd>
      </Ribbon>

      <Body>
        <Rail>
          <RailItem $on>
            <svg width="14" height="14" viewBox="0 0 14 14" fill="none" stroke="#000" strokeWidth="1.200"><path d="M.6 0v13.400H14M2.600 5.600h2v5h-2zM6.600 3.600h2v7h-2zM10.600 1.600h2v9h-2z" /></svg>
          </RailItem>
          <RailItem>
            <svg width="16" height="15" viewBox="0 0 16 15" fill="none" stroke={GREY}><path d="M.500.500h15v14H.500zM.500 3.500h15M.500 7.500h15M.500 11h15M5.500 3.500v11M10.500 3.500v11" /></svg>
          </RailItem>
          <RailItem>
            <svg width="18" height="18" viewBox="0 0 18 18" fill="none" stroke={GREY}><path d="M.500 5.500h7v7h-7zM.500 8h7M10.500.500h7v7h-7zM10.500 3h7M10.500 10.500h7v7h-7zM10.500 13h7M4 5.500V3.500h6.500M4 12.500v3h6.500" /></svg>
          </RailItem>
          <RailItem>
            <svg width="18" height="17" viewBox="0 0 18 17" fill="none" stroke={GREY}><path d="M5.500 9V.500h6l4 4v6c0 3-1 4-2 4M11.500.500v4h4M17 5v6c0 3-1 4-2 5" /><text x="0" y="15.500" fontSize="7" fontWeight="600" textLength="13" fill="#605e5c" stroke="none">DAX</text></svg>
          </RailItem>
        </Rail>

        <Center>
          <CenterTop>
            <Canvas>
              <Report>
                <Brand>
                  <Logo>
                    <svg width="48" height="20" viewBox="62 180 48 20" fill="#fff"><circle cx="71.200" cy="191" r="8.200" /><path d="M75 181.500q3-2 5-1l1 15q-1 3-4 3l-4-1zM81.500 189.500h4.500v9h-4.500z" /><circle cx="83.500" cy="184" r="2.600" /><circle cx="93.700" cy="191" r="8.200" /><circle cx="105.800" cy="195.700" r="3.200" /></svg>
                  </Logo>
                  <Back>
                    <svg width="19" height="18" viewBox="0 0 19 18" fill="none" stroke="#fff" strokeWidth="1.400"><path d="M19 9H1M9 .8L1 9l8 8.200" /></svg>
                  </Back>
                </Brand>
                <Sheet>
                  <SheetHead>
                    <HeadTitle>Formação Power BI Analyst</HeadTitle>
                    <HeadSub>Desafio de Projeto da DIO</HeadSub>
                  </SheetHead>
                  <BigTitle>Relatório de Lucro Detalhado</BigTitle>
                  <Board>
                    <Column $w={332}>
                      <Card $w={332} $h={58}>
                        <Slicer><SlicerTile>2013</SlicerTile><SlicerTile>2014</SlicerTile></Slicer>
                      </Card>
                      <Card $w={332} $h={261} $mt={12}><Decomposition /></Card>
                    </Column>
                    <Column $w={324}>
                      <Pair>
                        <Card $w={170} $h={164}><Radar /></Card>
                        <Card $w={143} $h={160}>
                          <MapBox>
                            <ChartTitle>Lucro por Segmento</ChartTitle>
                            <MapRow>
                              <MapCol $w={112}>
                                <MapTile $c="#118dff" $h={91}>Government</MapTile>
                                <MapTile $c="#12239e" $h={33}>Small Business</MapTile>
                              </MapCol>
                              <MapCol $w={14}>
                                <MapTile $c="#e66c37" $h={83} />
                                <MapTile $c="#6b007b" $h={41} />
                              </MapCol>
                            </MapRow>
                          </MapBox>
                        </Card>
                      </Pair>
                      <Card $w={324} $h={163}><Waterfall /></Card>
                    </Column>
                  </Board>
                </Sheet>
              </Report>
              <Dotted />
            </Canvas>
            <SidePane $w={32} $bg="#fff" $last>
              <DoubleChevron left />
              <FunnelBox>
                <svg width="13" height="13" viewBox="0 0 13 13" fill="none" stroke={INK} strokeWidth="1.200"><path d="M12 .8v11L7 8H.8V5H7z" /></svg>
              </FunnelBox>
              <Vertical $mt={9} $ls={0}>Filtros</Vertical>
            </SidePane>
          </CenterTop>
          <TabBar>
            <Views>
              <View $w={22} $on>
                <svg width="19" height="15" viewBox="0 0 19 15" fill="none" stroke="#4a4846" strokeWidth="1.300"><path d="M.7.700h17.600v10H.700zM9.500 11v3M6 14h7" /></svg>
              </View>
              <View $w={14} $ml={27} $pb={2}>
                <svg width="14" height="21" viewBox="0 0 14 21" fill="none" stroke="#5a4846" strokeWidth="1.300"><rect x=".8" y=".8" width="11.900" height="19" rx="1" /><path d="M5.500 17.500h2.500" /></svg>
              </View>
              <View $w={5} $ml={20} $pb={0}><svg width="5" height="9" viewBox="0 -1 5 9"><path d="M5 0v9L0 4.500z" fill={SILVER} /></svg></View>
              <View $w={5} $ml={17} $pb={0}><svg width="5" height="9" viewBox="0 -1 5 9"><path d="M0 0v9l5-4.500z" fill={SILVER} /></svg></View>
            </Views>
            <PageTab $w={86}>Página 1</PageTab>
            <PageTab $w={88} $on>Página 2</PageTab>
            <AddTab><svg width="11" height="11" viewBox="0 0 11 11"><path d="M4 0h3v4h4v3H7v4H4V7H0V4h4z" fill="#fff" /></svg></AddTab>
          </TabBar>
        </Center>

        <SidePane $w={35}><DoubleChevron left /><Vertical $mt={14}>Seleção</Vertical></SidePane>
        <SidePane $w={35}><DoubleChevron left /><Vertical $mt={14}>Indicadores</Vertical></SidePane>

        <VisPane>
          <PaneHead>Visualizações<DoubleChevron /></PaneHead>
          <SubHead>Criar visual</SubHead>
          <Modes>
            <Mode $on>
              <svg width="24" height="24" viewBox="0 0 24 24" fill="none" stroke={INK}><path d="M0 .500h19" /><path d="M.500 5.500h23v6H.500zM.500 16.500h23v6H.500z" fill={GREEN} stroke="#111" strokeDasharray="1.500 1.500" strokeWidth="1.200" /></svg>
            </Mode>
            <Mode>
              <svg width="25" height="26" viewBox="0 0 25 26" fill="none" stroke={INK} strokeWidth="1.300"><path d="M8 24.500H1.500V1H12l5.500 6v3M12 1v6.500h5.500" /><path d="M23.500 9.500L15 19l-3-2 11.500-7.500zM12 17c-4 0-2 5-6 7.500 5 1 9-1 9-5.500" /></svg>
            </Mode>
          </Modes>
          <TabLine width="180" height="9" viewBox="0 0 180 9" fill="none" stroke="#8a8886"><path d="M0 8.500h16l8-7.500 8 7.500h148" /></TabLine>
          <VisGrid>{visuals.map((v, i) => <React.Fragment key={i}>{v}</React.Fragment>)}</VisGrid>
          <Dashes />
          <Custom>
            <svg width="19" height="19" viewBox="0 0 19 19" fill="none" stroke="#8a8886"><circle cx="9.500" cy="9.500" r="8.700" strokeWidth="1.300" /><circle cx="9.500" cy="9.500" r="6" /><path d="M6 3.500l4 1 5 8-3 3-8-2z" fill="#e28a3d" fillOpacity=".9" stroke="none" /><circle cx="9" cy="10" r="2.500" stroke="#b5754a" /></svg>
          </Custom>
          <Fields>
            <FieldCol>
              <FieldName>Valores</FieldName>
              <Well>Adicionar os campos de da...</Well>
              <FieldName $b>Drill-through</FieldName>
              <CrossRow>Relatório cruzado<Toggle><Knob /></Toggle></CrossRow>
            </FieldCol>
            <ThumbA />
          </Fields>
        </VisPane>

        <DataPane>
          <PaneHead>Dados<DoubleChevron /></PaneHead>
          <Search>
            <svg width="15" height="15" viewBox="0 0 15 15" fill="none" stroke="#605e5c" strokeWidth="1.100"><circle cx="9.500" cy="5.500" r="4.700" /><path d="M6 9L.8 14.200" /></svg>
            Pesquisar
          </Search>
          <Tree>
            <TreeRows>
              {nodes.map((n) => (
                <TreeRow key={n.name} $in={n.indent}>
                  <Slot $w={16}>{n.open && <Chevron />}</Slot>
                  {n.box && <Slot $w={20}><Check /></Slot>}
                  <Slot $w={18}>{n.icon}</Slot>
                  {n.name}
                </TreeRow>
              ))}
            </TreeRows>
            <ThumbB />
          </Tree>
        </DataPane>
      </Body>

      <Status>
        Página 2 de 2
        <Notice>Nenhuma nova notificação (Desativada)</Notice>
      </Status>
      <BottomStrip>
        <BottomEdge $w={5} />
        <BottomEdge $w={15}><EdgeLine /></BottomEdge>
      </BottomStrip>
    </Screen>
  );
}
